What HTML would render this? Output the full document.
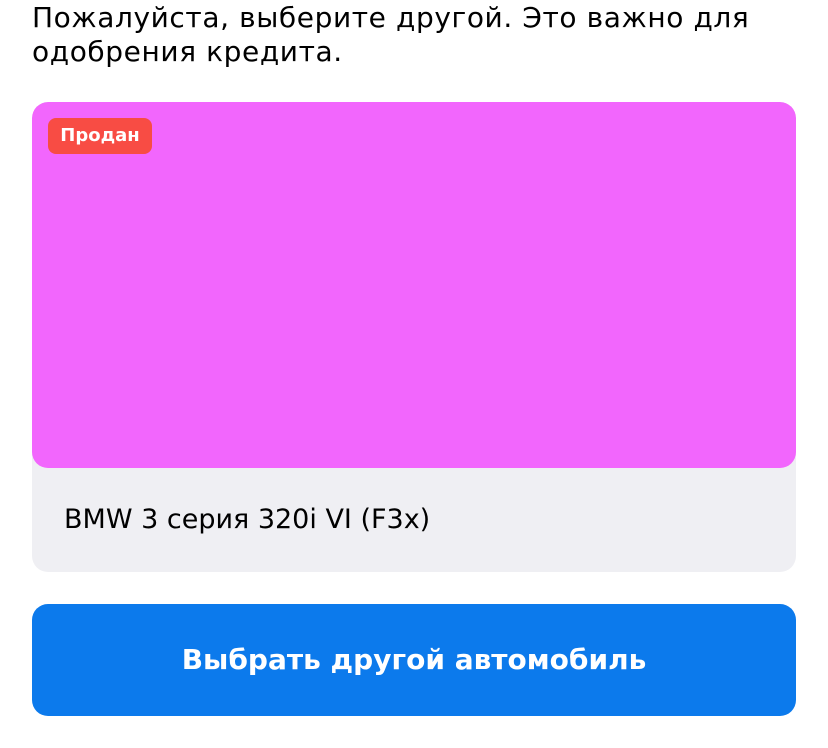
<!DOCTYPE html>
<html><head><meta charset="utf-8"><style>
body{margin:0;width:828px;height:748px;background:#fff;font-family:"DejaVu Sans","Liberation Sans",sans-serif;position:relative;overflow:hidden}
.t{position:absolute;left:32px;top:1px;font-size:28px;line-height:34px;color:#000;width:790px;letter-spacing:0.6px;white-space:nowrap}
.card{position:absolute;left:32px;top:102px;width:764px;height:470px;border-radius:16px;background:#efeff3;overflow:hidden}
.img{position:absolute;left:0;top:0;width:764px;height:366px;background:#f266fd;border-radius:16px}
.badge{position:absolute;left:16px;top:16px;width:104px;height:36px;border-radius:8px;background:#f84c44;color:#fff;font-size:18px;font-weight:bold;line-height:36px;text-align:center}
.name{position:absolute;left:32px;top:401px;font-size:27px;line-height:34px;color:#000;white-space:nowrap}
.btn{position:absolute;left:32px;top:604px;width:764px;height:112px;border-radius:16px;background:#0c7aec;color:#fff;font-size:28px;font-weight:bold;line-height:112px;text-align:center;white-space:nowrap}
</style></head><body>
<div class="t">Пожалуйста, выберите другой. Это важно для<br>одобрения кредита.</div>
<div class="card"><div class="img"><div class="badge">Продан</div></div><div class="name">BMW 3 серия 320i VI (F3x)</div></div>
<div class="btn">Выбрать другой автомобиль</div>
</body></html>
